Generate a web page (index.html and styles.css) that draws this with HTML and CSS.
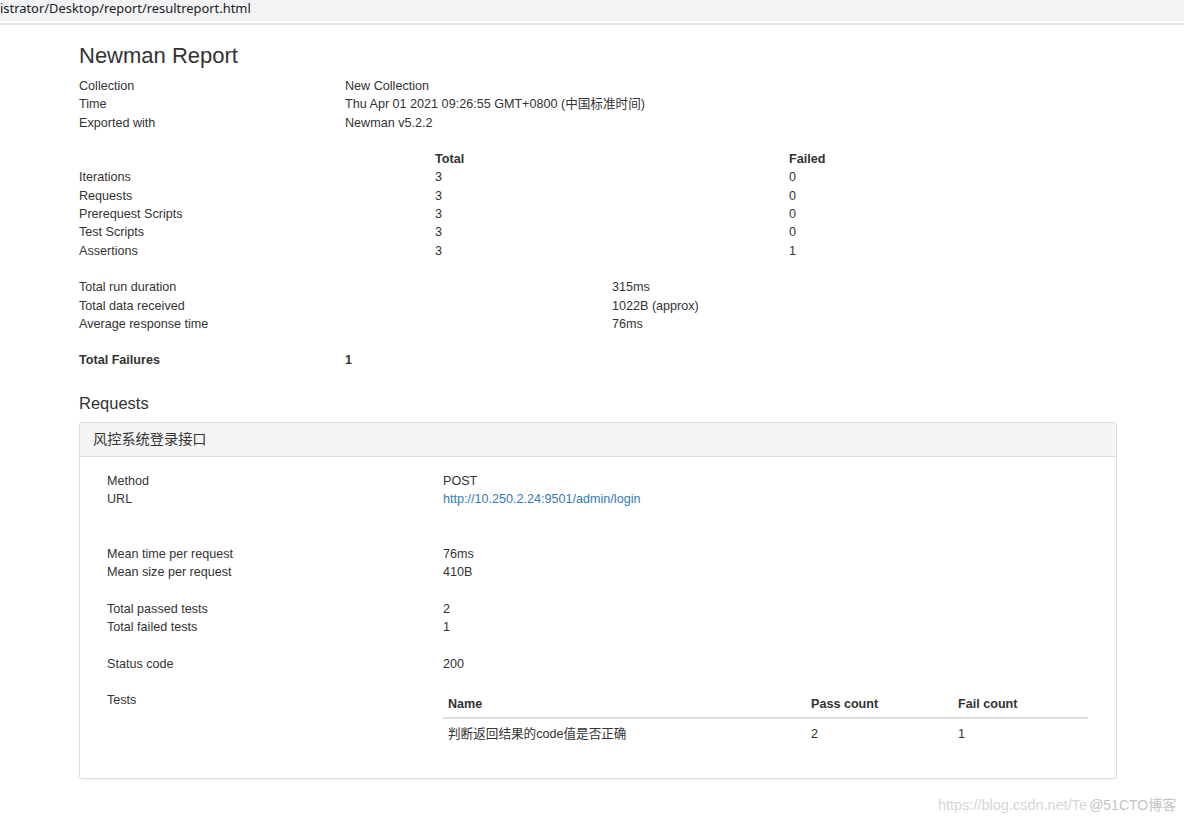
FILE: index.html
```html
<!DOCTYPE html>
<html lang="zh-CN">
<head>
<meta charset="utf-8">
<title>Newman Report</title>
<link rel="stylesheet" href="styles.css">
</head>
<body>
<div class="topbar">istrator/Desktop/report/resultreport.html</div>
<div class="topline"></div>

<div class="container">
  <h1 class="title">Newman Report</h1>

  <div class="kv info">
    <div>Collection</div><div>New Collection</div>
    <div>Time</div><div>Thu Apr 01 2021 09:26:55 GMT+0800 (中国标准时间)</div>
    <div>Exported with</div><div>Newman v5.2.2</div>
  </div>

  <div class="stats gap">
    <div></div><div class="b">Total</div><div class="b">Failed</div>
    <div>Iterations</div><div>3</div><div>0</div>
    <div>Requests</div><div>3</div><div>0</div>
    <div>Prerequest Scripts</div><div>3</div><div>0</div>
    <div>Test Scripts</div><div>3</div><div>0</div>
    <div>Assertions</div><div>3</div><div>1</div>
  </div>

  <div class="kv wide gap">
    <div>Total run duration</div><div>315ms</div>
    <div>Total data received</div><div>1022B (approx)</div>
    <div>Average response time</div><div>76ms</div>
  </div>

  <div class="kv gap b">
    <div>Total Failures</div><div>1</div>
  </div>

  <h4 class="section">Requests</h4>

  <div class="panel">
    <div class="panel-heading">风控系统登录接口</div>
    <div class="panel-body">
      <div class="kv req">
        <div>Method</div><div>POST</div>
        <div>URL</div><div><a class="link" href="#">http://10.250.2.24:9501/admin/login</a></div>
      </div>
      <div class="kv req gap2">
        <div>Mean time per request</div><div>76ms</div>
        <div>Mean size per request</div><div>410B</div>
      </div>
      <div class="kv req gap">
        <div>Total passed tests</div><div>2</div>
        <div>Total failed tests</div><div>1</div>
      </div>
      <div class="kv req gap">
        <div>Status code</div><div>200</div>
      </div>
      <div class="kv req gap">
        <div>Tests</div>
        <div>
          <table class="tests">
            <thead>
              <tr><th class="c-name">Name</th><th class="c-pass">Pass count</th><th>Fail count</th></tr>
            </thead>
            <tbody>
              <tr><td>判断返回结果的code值是否正确</td><td>2</td><td>1</td></tr>
            </tbody>
          </table>
        </div>
      </div>
    </div>
  </div>
</div>

<div class="watermark"><span class="wm1">https://blog.csdn.net/Te</span><span class="wm2">@51CTO博客</span></div>
</body>
</html>
```

FILE: styles.css
```css
* { box-sizing: border-box; }
html, body { margin: 0; padding: 0; background: #fff; }
body {
  font-family: "Liberation Sans", Arial, "Noto Sans CJK SC", sans-serif;
  font-size: 12.6px;
  line-height: 18.3px;
  color: #333;
  position: relative;
  min-height: 822px;
  overflow: hidden;
}
.topbar {
  height: 21px;
  background: #f1f3f4;
  font-family: "Noto Sans", "Liberation Sans", "Noto Sans CJK SC", sans-serif;
  font-size: 12.9px;
  line-height: 17px;
  color: #202124;
  white-space: nowrap;
  overflow: hidden;
}
.topline {
  height: 2px;
  margin-top: 2px;
  background: #e4e4e4;
}
.container {
  margin-left: 79px;
  width: 1038px;
}
.title {
  font-size: 22px;
  font-weight: normal;
  line-height: 26px;
  margin: 18px 0 8px 0;
  color: #333;
}
.kv {
  display: grid;
  grid-template-columns: 266px 1fr;
}
.kv.wide { grid-template-columns: 533px 1fr; }
.stats {
  display: grid;
  grid-template-columns: 356px 354px 1fr;
}
.gap { margin-top: 18.3px; }
.gap2 { margin-top: 36.6px; }
.b { font-weight: bold; }
.section {
  font-size: 16.5px;
  font-weight: normal;
  line-height: 20px;
  margin: 23px 0 9px 0;
}
.panel {
  border: 1px solid #ddd;
  border-radius: 3px;
  box-shadow: 0 1px 1px rgba(0,0,0,0.04);
}
.panel-heading {
  height: 34px;
  background: #f5f5f5;
  border-bottom: 1px solid #ddd;
  padding: 7px 13px 0;
  font-size: 14.2px;
  line-height: 18px;
  border-radius: 2px 2px 0 0;
}
.panel-body {
  padding: 15px 28px 30px 27px;
}
.kv.req { grid-template-columns: 336px 1fr; }
.link { color: #337ab7; text-decoration: none; }
.tests {
  width: 645px;
  border-collapse: collapse;
}
.tests th {
  text-align: left;
  font-weight: bold;
  padding: 4px 5px 3px;
  border-bottom: 2px solid #ddd;
}
.tests td {
  padding: 6px 5px 5px;
}
.c-name { width: 363px; }
.c-pass { width: 147px; }
.watermark {
  position: absolute;
  left: 938px;
  top: 796px;
  white-space: nowrap;
  line-height: 18px;
}
.wm1 { color: #d6d6d6; font-size: 14.5px; }
.wm2 {
  color: #c4c4c4;
  font-size: 14px;
  margin-left: 2px;
  font-family: "Liberation Sans", "Noto Sans CJK SC", sans-serif;
}
```
